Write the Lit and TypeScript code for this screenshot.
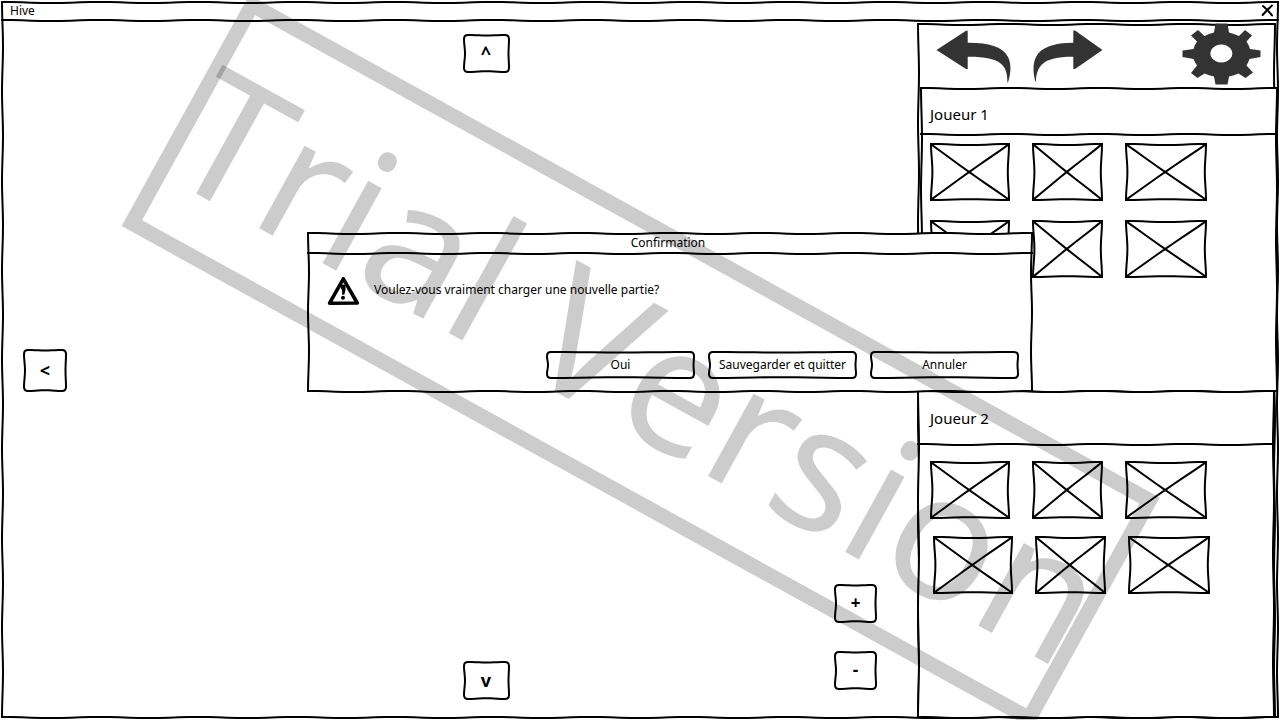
import { LitElement, html, svg, css } from "lit";
import { customElement, property, state } from "lit/decorators.js";

type Point = [number, number];

/** Points along a straight edge, bent towards its inner side in gentle waves. */
function wavyEdge(from: Point, to: Point, depth: number): Point[] {
  const dx = to[0] - from[0];
  const dy = to[1] - from[1];
  const length = Math.hypot(dx, dy);
  if (length < 1) return [from, to];
  const waves = Math.max(1, Math.round(length / 95));
  const steps = waves * 10;
  const points: Point[] = [];
  for (let i = 0; i <= steps; i++) {
    const t = i / steps;
    const bend = (depth / 2) * (1 - Math.cos(2 * Math.PI * waves * t));
    points.push([
      from[0] + dx * t - (dy / length) * bend,
      from[1] + dy * t + (dx / length) * bend,
    ]);
  }
  return points;
}

const toPath = (points: Point[]) =>
  points.map(([x, y]) => `${x.toFixed(2)} ${y.toFixed(2)}`).join(" L");

/** How far each edge bends: top, right, bottom, left. */
const bends = {
  box: [1, 1, -1, 1],
  round: [0.5, 0.5, 0.8, 1],
  cross: [1, 1.2, 0.7, 1.4],
  rule: [1, 0, 0, 0],
};

/** Hand-drawn outline that fills the box of its parent. */
@customElement("sketch-frame")
export class SketchFrame extends LitElement {
  @property() kind: "box" | "round" | "cross" | "rule" = "box";
  @state() private w = 0;
  @state() private h = 0;
  private observer?: ResizeObserver;

  static styles = css`
    :host {
      display: block;
      pointer-events: none;
    }
    :host([kind="rule"]) {
      height: 2px;
    }
    :host(:not([kind="rule"])) {
      position: absolute;
      inset: 0;
      z-index: -1;
    }
    .drawing {
      display: block;
      width: 100%;
      height: 100%;
      overflow: visible;
    }
    .stroke {
      stroke: #000;
      stroke-width: 2;
      stroke-linejoin: miter;
      stroke-linecap: square;
      fill: none;
    }
    .paper {
      fill: #fff;
    }
  `;

  connectedCallback() {
    super.connectedCallback();
    this.observer = new ResizeObserver(() => this.measure());
    this.observer.observe(this);
  }

  disconnectedCallback() {
    super.disconnectedCallback();
    this.observer?.disconnect();
  }

  private measure() {
    this.w = this.offsetWidth;
    this.h = this.offsetHeight;
  }

  private outline(): string {
    const r = this.kind === "round" ? 4 : 0;
    const [l, t, right, b] = [1, 1, this.w - 1, this.h - 1];
    const depth = bends[this.kind];
    const top = wavyEdge([l + r, t], [right - r, t], depth[0]);
    const east = wavyEdge([right, t + r], [right, b - r], depth[1]);
    const bottom = wavyEdge([right - r, b], [l + r, b], depth[2]);
    const west = wavyEdge([l, b - r], [l, t + r], depth[3]);
    if (!r) return `M${toPath([...top, ...east, ...bottom, ...west])}Z`;
    return (
      `M${toPath(top)} Q${right} ${t} ${toPath(east)} ` +
      `Q${right} ${b} ${toPath(bottom)} Q${l} ${b} ${toPath(west)} ` +
      `Q${l} ${t} ${l + r} ${t}Z`
    );
  }

  render() {
    const { w, h } = this;
    if (!w) return html``;
    if (this.kind === "rule") {
      return html`<svg class="drawing" aria-hidden="true">
        <path class="stroke" d="M${toPath(wavyEdge([1, 1], [w - 1, 1], bends.rule[0]))}"></path>
      </svg>`;
    }
    const cross =
      this.kind === "cross"
        ? svg`<path class="stroke" d="M${toPath(wavyEdge([2, 2], [w - 2, h - 2], 0.5))} M${toPath(
            wavyEdge([w - 2, 2], [2, h - 2], 0.5)
          )}"></path>`
        : "";
    return html`<svg class="drawing" aria-hidden="true">
      <path
        class="stroke ${this.kind === "cross" ? "" : "paper"}"
        d=${this.outline()}
      ></path>
      ${cross}
    </svg>`;
  }
}

/** Push button with a sketched outline. */
@customElement("sketch-button")
export class SketchButton extends LitElement {
  @property() label = "";
  @property() name = "";

  static styles = css`
    :host {
      display: block;
    }
    .button {
      position: relative;
      isolation: isolate;
      display: block;
      width: 100%;
      height: 100%;
      margin: 0;
      padding: 0 0 1px;
      border: 0;
      background: none;
      color: inherit;
      font: inherit;
      cursor: pointer;
    }
  `;

  render() {
    return html`<button class="button" type="button" aria-label=${this.name || this.label}>
      <sketch-frame kind="round"></sketch-frame>${this.label}
    </button>`;
  }
}

/** A player's hand: name on top, rows of piece pictures below. */
@customElement("player-panel")
export class PlayerPanel extends LitElement {
  @property() name = "";

  static styles = css`
    :host {
      display: flex;
      flex-direction: column;
      position: relative;
      isolation: isolate;
    }
    .name {
      display: flex;
      align-items: center;
      box-sizing: border-box;
      height: var(--head-height, 46px);
      margin: 0;
      padding: var(--head-top, 8px) var(--edge, 10px) 0;
      font-size: 15px;
      line-height: 20px;
      font-weight: 400;
    }
    .rows {
      display: flex;
      flex-direction: column;
      gap: var(--row-gap, 19px);
      padding: var(--rows-top, 8px) var(--edge, 10px);
    }
    .row {
      display: flex;
      gap: 22px;
    }
    .row:last-child {
      padding-left: var(--last-indent, 0);
    }
    .piece {
      position: relative;
      isolation: isolate;
      width: 80px;
      height: 58px;
    }
    .piece:nth-child(2) {
      width: 71px;
    }
    .piece:nth-child(3) {
      width: 82px;
    }
  `;

  render() {
    const piece = html`<div class="piece" role="img">
      <sketch-frame kind="cross"></sketch-frame>
    </div>`;
    const row = html`<div class="row">${piece}${piece}${piece}</div>`;
    return html`
      <sketch-frame kind="box"></sketch-frame>
      <h2 class="name">${this.name}</h2>
      <sketch-frame kind="rule"></sketch-frame>
      <div class="rows">${row}${row}</div>
    `;
  }
}

@customElement("confirm-dialog")
export class ConfirmDialog extends LitElement {
  static styles = css`
    :host {
      display: block;
      isolation: isolate;
      font-size: 12px;
      line-height: 16px;
    }
    .title {
      margin: 0;
      padding: 3px 4px 1px 0;
      font-size: 12px;
      line-height: 16px;
      font-weight: 400;
      text-align: center;
    }
    .message {
      display: flex;
      gap: 14px;
      padding: 22px 20px 0;
    }
    .text {
      margin: 0;
      padding-top: 6px;
    }
    .icon {
      flex: none;
      width: 33px;
      height: 30px;
    }
    .outline {
      fill: none;
      stroke: #000;
      stroke-width: 3.6;
      stroke-linejoin: round;
    }
    .actions {
      display: flex;
      justify-content: flex-end;
      gap: 13px;
      padding: 45px 14px 13px;
    }
    .action {
      width: 149px;
      height: 28px;
    }
  `;

  render() {
    return html`
      <sketch-frame kind="box"></sketch-frame>
      <h1 class="title">Confirmation</h1>
      <sketch-frame kind="rule"></sketch-frame>
      <div class="message">
        <svg class="icon" viewBox="0 0 33 30" aria-hidden="true">
          <path class="outline" d="M16.3 2.8 L30.3 27 L2.6 27.2 Z"></path>
          <path d="M14 9.5 Q16.5 7.5 18.4 9.8 Q19.2 14 17.4 18.4 L15 18.8 Q15.6 14 13.8 12 Z"></path>
          <circle cx="16" cy="21.8" r="2"></circle>
        </svg>
        <p class="text">Voulez-vous vraiment charger une nouvelle partie?</p>
      </div>
      <div class="actions">
        <sketch-button class="action" label="Oui"></sketch-button>
        <sketch-button class="action" label="Sauvegarder et quitter"></sketch-button>
        <sketch-button class="action" label="Annuler"></sketch-button>
      </div>
    `;
  }
}

@customElement("app-root")
export class AppRoot extends LitElement {
  static styles = css`
    :host {
      display: block;
      box-sizing: border-box;
      position: relative;
      height: 100vh;
      padding: 1px 1px 2px;
      overflow: hidden;
      background: #fff;
      color: #000;
      font-family: "Noto Sans", sans-serif;
      font-size: 12px;
      line-height: 16px;
    }
    .window {
      position: relative;
      isolation: isolate;
      display: flex;
      flex-direction: column;
      height: 100%;
    }
    .titlebar {
      display: flex;
      justify-content: space-between;
      align-items: center;
      height: 18px;
      padding: 0 5px 0 9px;
    }
    .caption {
      padding-top: 2px;
    }
    .close,
    .tool {
      display: block;
      margin: 0;
      padding: 0;
      border: 0;
      background: none;
      cursor: pointer;
    }
    .glyph {
      display: block;
    }
    .cross {
      stroke: #000;
      stroke-width: 2;
      stroke-linecap: round;
      fill: none;
    }
    .content {
      flex: 1;
      min-height: 0;
      display: grid;
      grid-template-columns: minmax(0, 1fr) 363px;
    }
    .board {
      display: grid;
      grid-template-columns: auto 1fr auto;
      padding: 13px 39px 18px 22px;
      font-weight: 700;
      font-size: 18px;
    }
    .west {
      align-self: center;
      width: 44px;
      height: 43px;
      padding-top: 6px;
    }
    .column {
      display: flex;
      flex-direction: column;
      align-items: center;
      justify-content: space-between;
      padding-left: 71px;
    }
    .step {
      width: 47px;
      height: 39px;
    }
    .zoom {
      display: flex;
      flex-direction: column;
      justify-content: flex-end;
      gap: 28px;
      padding-bottom: 10px;
      font-size: 17px;
    }
    .scale {
      width: 43px;
      height: 39px;
    }
    .sidebar {
      position: relative;
      isolation: isolate;
      display: flex;
      flex-direction: column;
      margin: 2px 3px 0 1px;
    }
    .tools {
      display: flex;
      align-items: flex-start;
      gap: 22px;
      height: 64px;
      padding: 0 15px 0 19px;
      box-sizing: border-box;
    }
    .arrow {
      padding-top: 7px;
    }
    .settings {
      margin-left: auto;
    }
    .ink {
      fill: #333;
      fill-rule: evenodd;
    }
    .first {
      flex: 305 1 0;
      margin: 0 -2px 0 3px;
    }
    .second {
      flex: 328 1 0;
      margin: -2px 1px 0 0;
      --head-height: 53px;
      --head-top: 3px;
      --edge: 13px;
      --rows-top: 16px;
      --row-gap: 17px;
      --last-indent: 3px;
    }
    .dialog {
      position: absolute;
      top: 232px;
      left: 307px;
      right: 247px;
    }
    .watermark {
      position: absolute;
      inset: 0;
      width: 100%;
      height: 100%;
      pointer-events: none;
    }
    .mark-frame {
      fill: none;
      stroke: #000;
      stroke-width: 15;
      stroke-opacity: 0.2;
    }
    .mark-text {
      fill: #000;
      fill-opacity: 0.2;
      font-size: 176px;
      font-kerning: none;
    }
  `;

  render() {
    return html`
      <div class="window">
        <sketch-frame kind="box"></sketch-frame>
        <header class="titlebar">
          <span class="caption">Hive</span>
          <button class="close" type="button" aria-label="Fermer">
            <svg class="glyph" width="13" height="13" viewBox="0 0 13 13">
              <path class="cross" d="M2 2 Q7 6 11 11.4 M11 1.6 Q6 6 1.6 11"></path>
            </svg>
          </button>
        </header>
        <sketch-frame kind="rule"></sketch-frame>
        <div class="content">
          <main class="board">
            <sketch-button class="west" label="<" name="Gauche"></sketch-button>
            <div class="column">
              <sketch-button class="step" label="^" name="Haut"></sketch-button>
              <sketch-button class="step" label="v" name="Bas"></sketch-button>
            </div>
            <div class="zoom">
              <sketch-button class="scale" label="+" name="Agrandir"></sketch-button>
              <sketch-button class="scale" label="-" name="Réduire"></sketch-button>
            </div>
          </main>
          <aside class="sidebar">
            <sketch-frame kind="box"></sketch-frame>
            <div class="tools">
              <button class="tool arrow" type="button" aria-label="Annuler le coup">
                <svg class="glyph" width="75" height="54" viewBox="0 0 75 54">
                  <path
                    class="ink"
                    d="M.5 20 L30 .7 H31.7 V12.7 C52 12.5 66 16 72 27 C75.5 34 75 43 72 52.5 H71.4 C71.5 36 66 26.5 31.7 26.8 V39 H30 Z"
                  ></path>
                </svg>
              </button>
              <button class="tool arrow" type="button" aria-label="Rétablir le coup">
                <svg class="glyph" width="70" height="54" viewBox="0 0 70 54">
                  <path
                    class="ink"
                    d="M69.5 20 L42 .5 H40.3 V12.7 C21 12.8 8 17 3 27 C-.4 34 0 42 2.3 51.5 H2.9 C3.5 36 10 26.5 40.3 26.8 V39 H42 Z"
                  ></path>
                </svg>
              </button>
              <button class="tool settings" type="button" aria-label="Paramètres">
                <svg class="glyph" width="79" height="62" viewBox="0 0 79 62">
                  <path
                    class="ink"
                    d="M33.5 .5 H45.5 L47 9.5 Q52 10.5 57 13 L63 7 L70 12.5 L64.5 18.5 Q67 22 68 26 L78.5 27.5 V34 L67.5 36 Q66.5 39 64.5 42.5 L71 49.5 L63.5 55 L56.5 50.5 Q52 52.5 47 53.5 L45.5 61.5 H33.5 L32 53.5 Q27 52.5 22.5 50.5 L15.5 55 L9 50 L15 42.5 Q12.5 39 11.5 36 L.5 34 V27.5 L11.5 26 Q12.5 22 15 18.5 L9 12.5 L16 7 L22.5 13 Q27 10.5 32 9.5 Z M39.3 21.5 A11 9 0 1 0 39.4 21.5 Z"
                  ></path>
                </svg>
              </button>
            </div>
            <player-panel class="first" name="Joueur 1"></player-panel>
            <player-panel class="second" name="Joueur 2"></player-panel>
          </aside>
        </div>
      </div>
      <confirm-dialog class="dialog" role="dialog" aria-label="Confirmation"></confirm-dialog>
      <svg class="watermark" viewBox="0 0 1280 720">
        <g transform="translate(640 362) rotate(28.9)">
          <rect class="mark-frame" x="-512" y="-125" width="1025" height="249"></rect>
          <text class="mark-text" x="-511" y="67">Trial Version</text>
        </g>
      </svg>
    `;
  }
}
